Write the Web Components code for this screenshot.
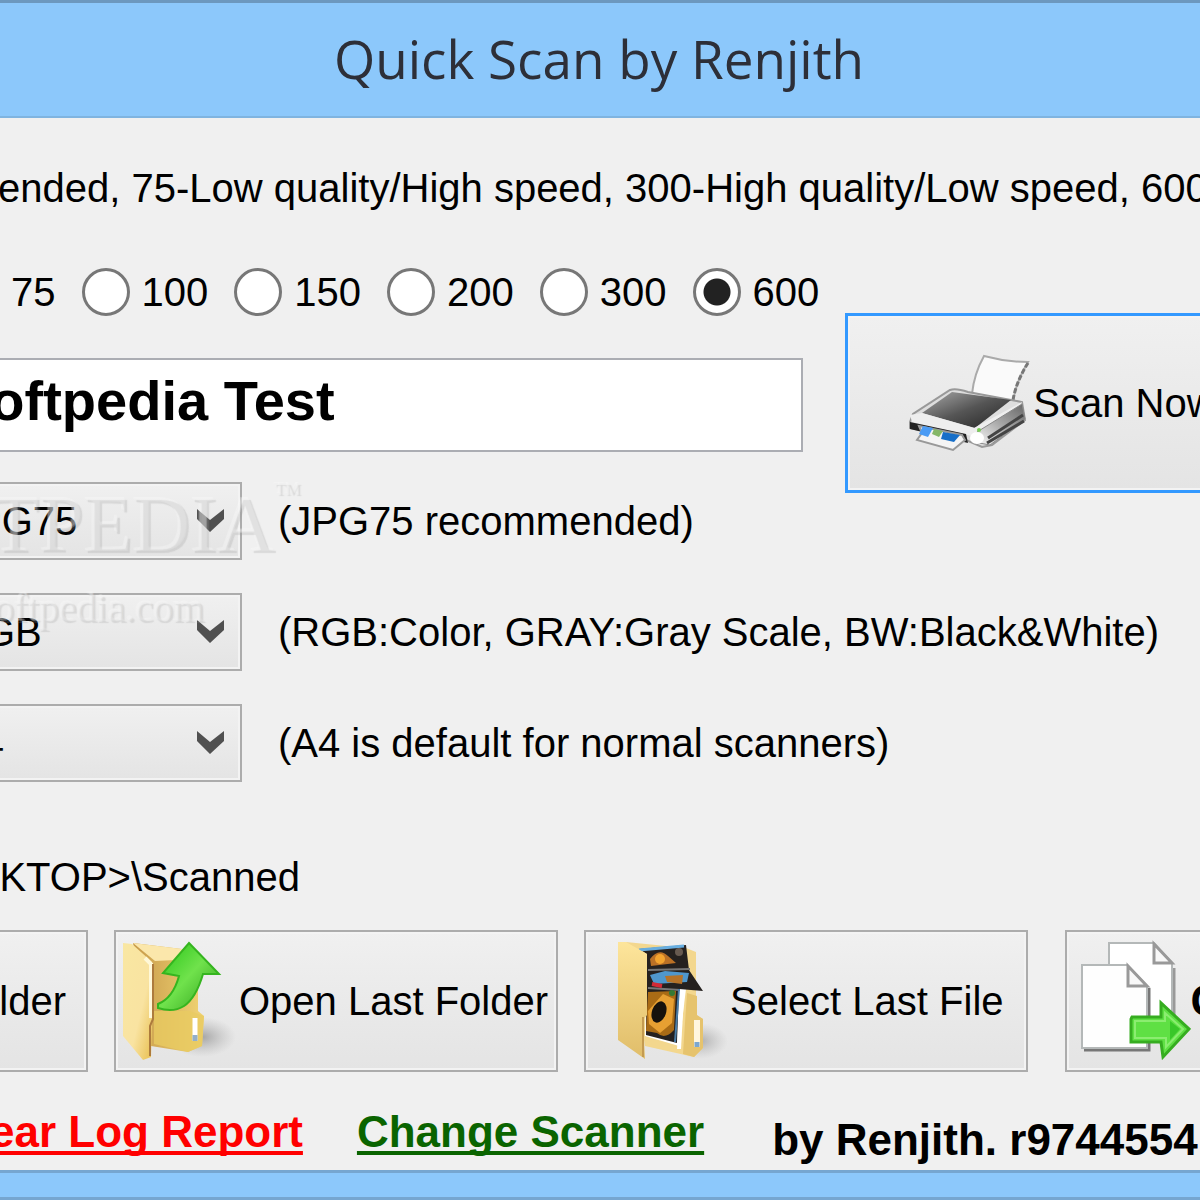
<!DOCTYPE html>
<html lang="en">
<head>
<meta charset="utf-8">
<title>Quick Scan by Renjith</title>
<style>
    body {
        margin: 0;
        overflow: hidden;
        font: 40px/60px "Liberation Sans", sans-serif;
        color: #000;
        background: #f0f0f0;
    }
</style>
</head>
<body>
<scan-window heading="Quick Scan by Renjith">
    <scan-note>ended, 75-Low quality/High speed, 300-High quality/Low speed, 600</scan-note>
    <scan-job></scan-job>
    <scan-options>
        <scan-option name="format" value="JPG75">(JPG75 recommended)</scan-option>
        <scan-option name="color" value="RGB">(RGB:Color, GRAY:Gray Scale, BW:Black&amp;White)</scan-option>
        <scan-option name="paper" value="A4">(A4 is default for normal scanners)</scan-option>
        <soft-mark></soft-mark>
    </scan-options>
    <scan-path>KTOP&gt;\Scanned</scan-path>
    <scan-actions></scan-actions>
    <scan-footer></scan-footer>
</scan-window>

<script>
const FACE = `
    border: 2px solid #acacac;
    background: linear-gradient(#f0f0f0, #e4e4e4);
    box-shadow: inset 0 0 0 2px #f3f3f3;
    font: inherit;
    color: inherit;
    white-space: nowrap;
`;

const ICONS = {
    printer: `
        <svg width="122" height="98" viewBox="0 0 122 98" aria-hidden="true">
            <defs>
                <linearGradient id="lid" x1="0" y1="0" x2="1" y2="1"><stop offset="0" stop-color="#aaa"/><stop offset=".5" stop-color="#555"/><stop offset="1" stop-color="#222"/></linearGradient>
                <linearGradient id="side" x1="0" y1="1" x2="1" y2="0"><stop offset="0" stop-color="#fff"/><stop offset=".5" stop-color="#aaa"/><stop offset="1" stop-color="#666"/></linearGradient>
            </defs>
            <path d="M76 2Q98 8 120 8Q107 30 105 48L64 40Q66 20 76 2Z" fill="#fafafa" stroke="#aaa" stroke-width="2"/>
            <path d="M120 9Q108 28 105 46" fill="none" stroke="#777" stroke-width="3" stroke-dasharray="5 2"/>
            <path d="M2 68L5 60L42 36Q48 34 60 38L114 48L117 66L84 91L74 93L58 86L2 74Z" fill="#ddd" stroke="#999" stroke-width="2"/>
            <path d="M14 59L44 38L103 46L67 74Z" fill="url(#lid)"/>
            <path d="M2 61L14 59L66 74L114 48L110 58L68 83L4 68Z" fill="#eee"/>
            <path d="M69 78L114 50L117 65L82 91L66 88Z" fill="url(#side)" stroke="#888"/>
            <path d="M80 84L115 61M79 89L116 67" stroke="#444" stroke-width="3" fill="none"/>
            <path d="M2 68L58 80L60 89L2 75Z" fill="#222"/>
            <path d="M11 72L54 81L57 86L45 96L9 86L14 79Z" fill="#f4f4f4" stroke="#999" stroke-width="2"/>
            <path d="M15 72L25 74L20 83L11 80Z" fill="#4a9bf4"/>
            <path d="M26 75L35 77L31 83L24 80Z" fill="#85b768"/>
            <path d="M35 78L52 81L46 88L33 85Z" fill="#176fc8"/>
            <ellipse cx="69" cy="84" rx="7" ry="6" fill="#fff"/>
            <circle cx="71" cy="76" r="2" fill="#78cc55"/>
        </svg>`,
    open: `
        <svg width="116" height="124" viewBox="0 0 116 124" aria-hidden="true">
            <defs>
                <linearGradient id="flap" x1="0" y1="0" x2="1" y2="1"><stop offset="0" stop-color="#f9e7a2"/><stop offset=".6" stop-color="#f9e3a1"/><stop offset="1" stop-color="#e8bf50"/></linearGradient>
                <linearGradient id="back" x1="0" y1="0" x2="1" y2="0"><stop offset="0" stop-color="#c79a4a"/><stop offset="1" stop-color="#f1d473"/></linearGradient>
                <linearGradient id="up" x1="0" y1="0" x2="1" y2="1"><stop offset="0" stop-color="#24c415"/><stop offset=".5" stop-color="#70e24c"/><stop offset="1" stop-color="#2b9e18"/></linearGradient>
                <radialGradient id="shade"><stop offset="0" stop-color="#888" stop-opacity=".7"/><stop offset="1" stop-color="#aaa" stop-opacity="0"/></radialGradient>
            </defs>
            <ellipse cx="82" cy="98" rx="34" ry="20" fill="url(#shade)"/>
            <path d="M13 4L70 11L78 20V72L84 77L82 107L68 113L31 107Z" fill="url(#back)"/>
            <path d="M13 4L70 11L76 20L35 22Z" fill="#fbe7ab"/>
            <path d="M34 72H70L84 77L82 107L68 113L34 105Z" fill="#e8ca61" opacity=".8"/>
            <path d="M3 4L12 5L32 23V81L31 118L23 121L3 97Z" fill="url(#flap)"/>
            <path d="M25 19L31 25V79" fill="none" stroke="#fff8d8" stroke-width="4"/>
            <path d="M33 25V80L30 87V117" fill="none" stroke="#ad7b3d" stroke-width="2"/>
            <path d="M75 79V102" stroke="#fff" stroke-width="5"/>
            <path d="M75 96V102" stroke="#93afc8" stroke-width="5"/>
            <path d="M69 4L99 35H83Q76 59 64 67Q53 74 38 69L38 65Q53 59 59 37L43 34Z" fill="url(#up)" stroke="#35b51f" stroke-width="2"/>
        </svg>`,
    select: `
        <svg width="116" height="124" viewBox="0 0 116 124" aria-hidden="true">
            <defs>
                <linearGradient id="door" x1="0" y1="0" x2="0" y2="1"><stop offset="0" stop-color="#fde59b"/><stop offset="1" stop-color="#e0bd69"/></linearGradient>
                <radialGradient id="cast"><stop offset="0" stop-color="#888" stop-opacity=".6"/><stop offset="1" stop-color="#aaa" stop-opacity="0"/></radialGradient>
            </defs>
            <ellipse cx="86" cy="102" rx="28" ry="18" fill="url(#cast)"/>
            <path d="M12 3L72 9L82 13V76L89 80V109L80 118L31 107Z" fill="#f3d78e"/>
            <path d="M33 15L72 8V50L65 107L31 97Z" fill="#fff"/>
            <path d="M25 10L72 6L75 31L89 52L65 50L63 104L32 96L33 15Z" fill="#25211f"/>
            <path d="M25 11L70 7" stroke="#68aee0" stroke-width="3"/>
            <path d="M36 20Q45 8 54 17L62 24L37 27Z" fill="#bb7126"/>
            <circle cx="46" cy="20" r="5" fill="#f3a42f"/><circle cx="65" cy="13" r="4" fill="#675a50"/>
            <path d="M34 31L76 30M34 49L66 51" stroke="#777" stroke-width="2"/>
            <path d="M36 36L51 32L75 34L73 43L40 45Z" fill="#4f97cc"/>
            <path d="M51 37L69 36L68 45L53 43Z" fill="#b67328"/>
            <path d="M38 45L48 47" stroke="#d32b36" stroke-width="4"/>
            <path d="M34 53L62 52L60 91Q51 101 43 94L32 92Z" fill="#a96b15"/>
            <path d="M49 55L60 60L58 84L46 94L35 85L34 72Z" fill="#e7a032"/>
            <ellipse cx="45" cy="73" rx="7" ry="11" transform="rotate(20 45 73)" fill="#17120c"/>
            <circle cx="58" cy="54" r="3" fill="#357a35"/>
            <path d="M65 50L61 103" stroke="#497ca5" stroke-width="2"/>
            <path d="M73 54L83 57V76L89 80V109L80 118L69 115Z" fill="#e6c36d"/>
            <path d="M68 57L65 110" stroke="#fff" stroke-width="4"/>
            <path d="M83 81V108" stroke="#fff6de" stroke-width="6"/>
            <path d="M83 103V108" stroke="#7ba7d0" stroke-width="5"/>
            <path d="M4 3L12 3L33 15V76L29 81L31 120L4 101Z" fill="url(#door)"/>
            <path d="M29 78V118" stroke="#c49b51" stroke-width="2"/>
        </svg>`,
    copy: `
        <svg width="112" height="124" viewBox="0 0 112 124" aria-hidden="true">
            <path d="M33 96H95V29" fill="none" stroke="#999" stroke-width="3"/>
            <path d="M30 4H75L93 24V93H30Z" fill="#fff" stroke="#b4b8b8" stroke-width="2"/>
            <path d="M75 5V24H93Z" fill="#f8f8f8" stroke="#999" stroke-width="3"/>
            <path d="M5 111H70V49" fill="none" stroke="#777" stroke-width="3"/>
            <path d="M3 26H48L68 47V109H3Z" fill="#fefefe" stroke="#b4b8b8" stroke-width="2"/>
            <path d="M49 27V47H68Z" fill="#f8f8f8" stroke="#999" stroke-width="3"/>
            <path d="M53 78H82V64L110 90L84 118L82 103H52V80Z" fill="#5fe044" stroke="#36ad20" stroke-width="3"/>
            <path d="M56 82H86V74L104 90L87 108V99H56Z" fill="none" stroke="#8bed70" stroke-width="2"/>
            <path d="M91 82L101 90L91 101Z" fill="#39c729"/>
        </svg>`
};

class ScanWindow extends HTMLElement {
    connectedCallback() {
        this.attachShadow({ mode: 'open' });
        this.shadowRoot.innerHTML = `
            <style>
                :host { display: flex; flex-direction: column; min-height: 100vh; overflow: hidden; }
                header {
                    background: #8cc8fb; border: solid #6c98be; border-width: 3px 0 2px;
                    border-bottom-color: #7fb4e0; text-align: center; padding: 21px 2px 22px 0;
                }
                h1 { margin: 0; font: 53px/70px "Open Sans", "Noto Sans", sans-serif; color: #2d2f38; }
                /* wider than the screen on both sides */
                main { flex: 1; margin: 0 -60px; }
                footer { height: 24px; background: #8cc8fb; border: solid #76a6d0; border-width: 3px 0; }
            </style>
            <header><h1></h1></header>
            <main><slot></slot></main>
            <footer></footer>
        `;
        this.shadowRoot.querySelector('h1').textContent = this.getAttribute('heading');
    }
}
customElements.define('scan-window', ScanWindow);

class ScanNote extends HTMLElement {
    connectedCallback() {
        this.attachShadow({ mode: 'open' });
        this.shadowRoot.innerHTML = `
            <style>:host { display: block; padding: 40px 0 50px 58px; white-space: nowrap; }</style>
            <slot></slot>
        `;
    }
}
customElements.define('scan-note', ScanNote);

class ScanJob extends HTMLElement {
    connectedCallback() {
        const dpi = [75, 100, 150, 200, 300, 600];
        this.attachShadow({ mode: 'open' });
        this.shadowRoot.innerHTML = `
            <style>
                :host { display: flex; align-items: flex-start; gap: 26px; padding-left: 8px; }
                .left { flex: none; display: flex; flex-direction: column; gap: 42px; }
                fieldset { display: flex; gap: 26px; margin: 0; padding: 0 0 0 3px; border: 0; }
                label { display: flex; align-items: center; gap: 12px; line-height: 48px; }
                input[type=radio] {
                    appearance: none; box-sizing: border-box; width: 48px; height: 48px; margin: 0;
                    border: 3px solid #777; border-radius: 50%; background: #fff;
                }
                input[type=radio]:checked { background: radial-gradient(circle, #222 13px, #fff 14px); }
                .name {
                    box-sizing: border-box; height: 94px; margin: 0 16px 0 0; padding: 0 0 10px 3px;
                    border: 2px solid #abadb3; border-radius: 0; background: #fff; color: #000;
                    font: bold 56px "Liberation Sans", sans-serif;
                }
                button {
                    ${FACE}
                    flex: 1; height: 180px; margin-top: 45px; padding: 0 60px; border: 3px solid #3399ff;
                    display: flex; align-items: center; gap: 3px;
                }
            </style>
            <div class="left">
                <fieldset aria-label="Resolution">
                    ${dpi.map(d => `<label><input type="radio" name="dpi" value="${d}" ${d === 600 ? 'checked' : ''}>${d}</label>`).join('')}
                </fieldset>
                <input class="name" type="text" value="Softpedia Test" aria-label="File name">
            </div>
            <button type="button">${ICONS.printer}<span>Scan Now</span></button>
        `;
    }
}
customElements.define('scan-job', ScanJob);

class ScanOptions extends HTMLElement {
    connectedCallback() {
        this.attachShadow({ mode: 'open' });
        this.shadowRoot.innerHTML = `
            <style>
                /* the scan button hangs a little below the name box */
                :host {
                    display: flex; flex-direction: column; gap: 33px; position: relative;
                    margin-top: -11px; padding-left: 8px; line-height: 48px;
                }
            </style>
            <slot></slot>
        `;
    }
}
customElements.define('scan-options', ScanOptions);

class ScanOption extends HTMLElement {
    connectedCallback() {
        const name = this.getAttribute('name');
        const value = this.getAttribute('value');
        this.attachShadow({ mode: 'open' });
        this.shadowRoot.innerHTML = `
            <style>
                :host { display: flex; align-items: center; gap: 36px; white-space: nowrap; }
                .combo { display: grid; align-items: center; width: 294px; }
                select, svg { grid-area: 1 / 1; }
                select {
                    ${FACE}
                    appearance: none; height: 78px; padding: 0 0 0 5px; border-radius: 0;
                }
                svg { justify-self: end; margin-right: 17px; pointer-events: none; }
            </style>
            <div class="combo">
                <select id="${name}"><option>${value}</option></select>
                <svg width="29" height="24" viewBox="0 0 29 24" aria-hidden="true"><path d="M1 0L14 11L28 0V10L14 23L1 10Z" fill="#505050"/></svg>
            </div>
            <label for="${name}"><slot></slot></label>
        `;
    }
}
customElements.define('scan-option', ScanOption);

class SoftMark extends HTMLElement {
    connectedCallback() {
        this.attachShadow({ mode: 'open' });
        this.shadowRoot.innerHTML = `
            <style>
                :host {
                    position: absolute; top: 0; left: 0; width: 360px; pointer-events: none;
                    color: rgba(240, 240, 240, .25); white-space: nowrap;
                    text-shadow: 2px 2px 1px rgba(150, 150, 150, .25), -1px -1px 1px rgba(255, 255, 255, .3);
                }
                .logo { display: flex; justify-content: flex-end; font: 80px/84px "Liberation Serif", serif; }
                sup { font-size: 17px; line-height: 14px; }
                .site { padding-right: 96px; text-align: right; font: 40px/84px "Liberation Serif", serif; }
            </style>
            <div class="logo">TPEDIA<sup>TM</sup></div>
            <div class="site">oftpedia.com</div>
        `;
    }
}
customElements.define('soft-mark', SoftMark);

class ScanPath extends HTMLElement {
    connectedCallback() {
        this.attachShadow({ mode: 'open' });
        this.shadowRoot.innerHTML = `
            <style>:host { display: block; width: 360px; padding: 65px 0 23px; text-align: right; white-space: nowrap; }</style>
            <slot></slot>
        `;
    }
}
customElements.define('scan-path', ScanPath);

class ScanActions extends HTMLElement {
    connectedCallback() {
        this.attachShadow({ mode: 'open' });
        this.shadowRoot.innerHTML = `
            <style>
                :host { display: flex; gap: 26px; }
                button { ${FACE} flex: none; display: flex; align-items: center; height: 142px; padding: 0 8px 0 4px; gap: 3px; }
                .folder { width: 148px; padding-right: 20px; justify-content: flex-end; }
                .select { padding: 0 22px 0 28px; gap: 0; }
                .copy { flex: 1; margin-left: 11px; padding: 0 12px; gap: 0; font: bold 44px "Liberation Sans", sans-serif; }
            </style>
            <button class="folder" type="button">lder</button>
            <button type="button">${ICONS.open}<span>Open Last Folder</span></button>
            <button class="select" type="button">${ICONS.select}<span>Select Last File</span></button>
            <button class="copy" type="button" aria-label="Copy">${ICONS.copy}<span>C</span></button>
        `;
    }
}
customElements.define('scan-actions', ScanActions);

class ScanFooter extends HTMLElement {
    connectedCallback() {
        this.attachShadow({ mode: 'open' });
        this.shadowRoot.innerHTML = `
            <style>
                :host {
                    display: flex; align-items: flex-start; gap: 54px; padding: 30px 0 0 50px;
                    font: bold 44px/60px "Liberation Sans", sans-serif; white-space: nowrap;
                }
                a { text-decoration-thickness: 4px; text-underline-offset: 4px; text-decoration-skip-ink: none; }
                .clear { color: #f00; }
                .change { color: #0a6400; }
                .by { padding: 8px 0 0 14px; }
            </style>
            <a class="clear" href="#clear">ear Log Report</a>
            <a class="change" href="#scanner">Change Scanner</a>
            <span class="by">by Renjith. r9744554</span>
        `;
    }
}
customElements.define('scan-footer', ScanFooter);
</script>
</body>
</html>
